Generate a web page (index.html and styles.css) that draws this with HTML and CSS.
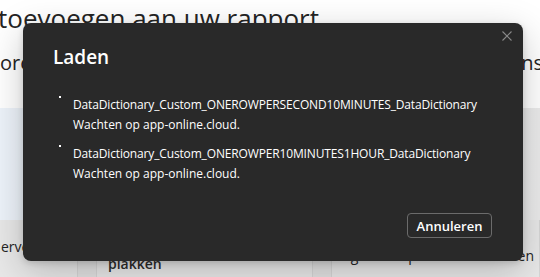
FILE: index.html
```html
<!DOCTYPE html>
<html lang="nl">
<head>
  <meta charset="UTF-8">
  <title>Laden</title>
  <link rel="stylesheet" href="styles.css">
</head>
<body>
  <div class="page">
    <h1 class="page-title">toevoegen aan uw rapport</h1>
    <div class="subline">
      <span>orc</span>
      <span>gegevens</span>
    </div>
    <div class="band"></div>
    <div class="cards">
      <div class="card card-first"><span class="card-text first-text">erve</span></div>
      <div class="card card-mid"><span class="card-text mid-text">Kopiëren en<br>plakken</span></div>
      <div class="card card-last"><span class="card-text last-text">Gegevens ophalen uit bronnen</span></div>
    </div>
  </div>

  <div class="dialog">
    <button class="close" aria-label="Sluiten">
      <svg width="10" height="10" viewBox="0 0 10 10"><path d="M0.5 0.5 L9.5 9.5 M9.5 0.5 L0.5 9.5" stroke="#8a8a8a" stroke-width="1.1" fill="none"/></svg>
    </button>
    <h2 class="dialog-title">Laden</h2>
    <ul class="items">
      <li>
        <div class="item-name">DataDictionary_Custom_ONEROWPERSECOND10MINUTES_DataDictionary</div>
        <div class="item-status">Wachten op app-online.cloud.</div>
      </li>
      <li>
        <div class="item-name">DataDictionary_Custom_ONEROWPER10MINUTES1HOUR_DataDictionary</div>
        <div class="item-status">Wachten op app-online.cloud.</div>
      </li>
    </ul>
    <div class="actions">
      <button class="cancel">Annuleren</button>
    </div>
  </div>
</body>
</html>
```

FILE: styles.css
```css
body {
  margin: 0;
  width: 540px;
  height: 277px;
  overflow: hidden;
  font-family: "Open Sans", "Noto Sans", sans-serif;
  background-color: #ffffff;
  color: #242424;
  position: relative;
}
.page {
  width: 540px;
}
.page-title {
  margin: 0 0 0 -2px;
  font-size: 26px;
  font-weight: 400;
  line-height: 36px;
  white-space: nowrap;
}
.subline {
  display: flex;
  justify-content: space-between;
  margin-top: 14px;
  font-size: 20px;
  line-height: 26px;
  height: 26px;
  overflow: hidden;
}
.subline span:last-child {
  margin-right: -3px;
}
.band {
  margin-top: 32px;
  height: 112px;
  background: linear-gradient(90deg, #edf3fa 0%, #eef2f7 50%, #ebebeb 100%);
}
.cards {
  display: flex;
  gap: 18px;
  height: 60px;
  background-color: #e2e2e2;
  margin-left: -160px;
}
.card {
  background-color: #e8e8e8;
  border-left: 1px solid #d6d6d6;
  border-right: 1px solid #d6d6d6;
}
.card-first { width: 236px; }
.card-mid { width: 215px; }
.card-last { flex: 1; }
.card-text {
  display: block;
  font-size: 14px;
  line-height: 20px;
}
.first-text {
  padding: 17px 0 0 160px;
}
.mid-text {
  padding: 14px 0 0 11px;
  font-weight: 600;
  color: #2c2c2c;
}
.last-text {
  padding: 26px 5px 0 0;
  text-align: right;
  white-space: nowrap;
}

.dialog {
  position: absolute;
  left: 23px;
  top: 23px;
  width: 500px;
  height: 238px;
  box-sizing: border-box;
  background-color: #292929;
  border-radius: 8px;
  box-shadow: 0 10px 36px rgba(0, 0, 0, 0.22), 0 2px 6px rgba(0, 0, 0, 0.15);
  color: #ffffff;
  padding: 20px 30px 23px 30px;
  display: flex;
  flex-direction: column;
}
.close {
  position: absolute;
  top: 8px;
  right: 11px;
  width: 10px;
  height: 10px;
  padding: 0;
  border: none;
  background: none;
  display: flex;
}
.dialog-title {
  margin: 0;
  font-size: 19px;
  font-weight: 600;
  line-height: 28px;
}
.items {
  list-style: none;
  margin: 24px 0 0 0;
  padding: 0 0 0 20px;
  font-size: 12px;
  letter-spacing: -0.15px;
  line-height: 20px;
}
.items li {
  position: relative;
  margin-bottom: 9px;
}
.items li::before {
  content: "";
  position: absolute;
  left: -14px;
  top: 1px;
  width: 2px;
  height: 2px;
  background-color: #ffffff;
}
.item-status {
  font-weight: 500;
  letter-spacing: 0;
}
.actions {
  margin-top: auto;
  display: flex;
  justify-content: flex-end;
}
.cancel {
  width: 85px;
  height: 25px;
  margin-right: 1px;
  background: none;
  border: 1px solid #6b6b6b;
  border-radius: 4px;
  color: #ffffff;
  font-family: "Open Sans", "Noto Sans", sans-serif;
  font-size: 13px;
  font-weight: 600;
  padding: 0;
}
```
